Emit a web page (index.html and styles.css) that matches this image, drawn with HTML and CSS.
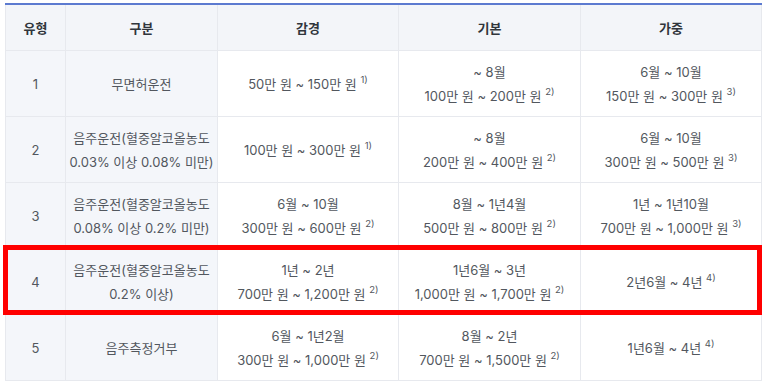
FILE: index.html
```html
<!DOCTYPE html>
<html lang="ko">
<head>
<meta charset="utf-8">
<title>음주·무면허 운전 처벌 기준</title>
<link rel="stylesheet" href="styles.css">
</head>
<body>
<div class="wrap">
  <table class="penalty">
    <colgroup>
      <col class="c-type">
      <col class="c-cat">
      <col class="c-a">
      <col class="c-b">
      <col class="c-c">
    </colgroup>
    <thead>
      <tr><th>유형</th><th>구분</th><th>감경</th><th>기본</th><th>가중</th></tr>
    </thead>
    <tbody>
      <tr>
        <td class="side">1</td>
        <td class="side">무면허운전</td>
        <td>50만 원 ~ 150만 원 <sup>1)</sup></td>
        <td>~ 8월<br>100만 원 ~ 200만 원 <sup>2)</sup></td>
        <td>6월 ~ 10월<br>150만 원 ~ 300만 원 <sup>3)</sup></td>
      </tr>
      <tr>
        <td class="side">2</td>
        <td class="side">음주운전(혈중알코올농도<br>0.03% 이상 0.08% 미만)</td>
        <td>100만 원 ~ 300만 원 <sup>1)</sup></td>
        <td>~ 8월<br>200만 원 ~ 400만 원 <sup>2)</sup></td>
        <td>6월 ~ 10월<br>300만 원 ~ 500만 원 <sup>3)</sup></td>
      </tr>
      <tr>
        <td class="side">3</td>
        <td class="side">음주운전(혈중알코올농도<br>0.08% 이상 0.2% 미만)</td>
        <td>6월 ~ 10월<br>300만 원 ~ 600만 원 <sup>2)</sup></td>
        <td>8월 ~ 1년4월<br>500만 원 ~ 800만 원 <sup>2)</sup></td>
        <td>1년 ~ 1년10월<br>700만 원 ~ 1,000만 원 <sup>3)</sup></td>
      </tr>
      <tr>
        <td class="side">4</td>
        <td class="side">음주운전(혈중알코올농도<br>0.2% 이상)</td>
        <td>1년 ~ 2년<br>700만 원 ~ 1,200만 원 <sup>2)</sup></td>
        <td>1년6월 ~ 3년<br>1,000만 원 ~ 1,700만 원 <sup>2)</sup></td>
        <td>2년6월 ~ 4년 <sup>4)</sup></td>
      </tr>
      <tr>
        <td class="side">5</td>
        <td class="side">음주측정거부</td>
        <td>6월 ~ 1년2월<br>300만 원 ~ 1,000만 원 <sup>2)</sup></td>
        <td>8월 ~ 2년<br>700만 원 ~ 1,500만 원 <sup>2)</sup></td>
        <td>1년6월 ~ 4년 <sup>4)</sup></td>
      </tr>
    </tbody>
  </table>
  <div class="highlight"></div>
</div>
</body>
</html>
```

FILE: styles.css
```css
html, body {
  margin: 0;
  padding: 0;
  background: #ffffff;
}

body {
  font-family: "Inter", "Noto Sans CJK KR", sans-serif;
  font-size: 13px;
  color: #52575e;
}

.wrap {
  position: relative;
  padding: 3px 0 0 5px;
}

.penalty {
  border-collapse: collapse;
  table-layout: fixed;
  width: 756px;
  border-top: 2px solid #5c7ad0;
}

.c-type { width: 60px; }
.c-cat { width: 152px; }
.c-a { width: 181px; }
.c-b { width: 182px; }
.c-c { width: 181px; }

.penalty th,
.penalty td {
  border: 1px solid #e7e9ee;
  text-align: center;
  vertical-align: middle;
  padding: 0 1px;
  line-height: 24px;
  white-space: nowrap;
}

.penalty th {
  height: 45px;
  background: #f3f5f9;
  color: #30353c;
  font-weight: 700;
  font-size: 13px;
}

.penalty td {
  height: 65px;
  background: #ffffff;
}

.penalty td.side {
  background: #f4f6fa;
}

.penalty sup {
  font-size: 9.5px;
  line-height: 0;
  vertical-align: 6px;
}

.highlight {
  position: absolute;
  left: 3px;
  top: 245px;
  width: 759px;
  height: 70px;
  box-sizing: border-box;
  border: 5px solid #ff0000;
  pointer-events: none;
}
```
